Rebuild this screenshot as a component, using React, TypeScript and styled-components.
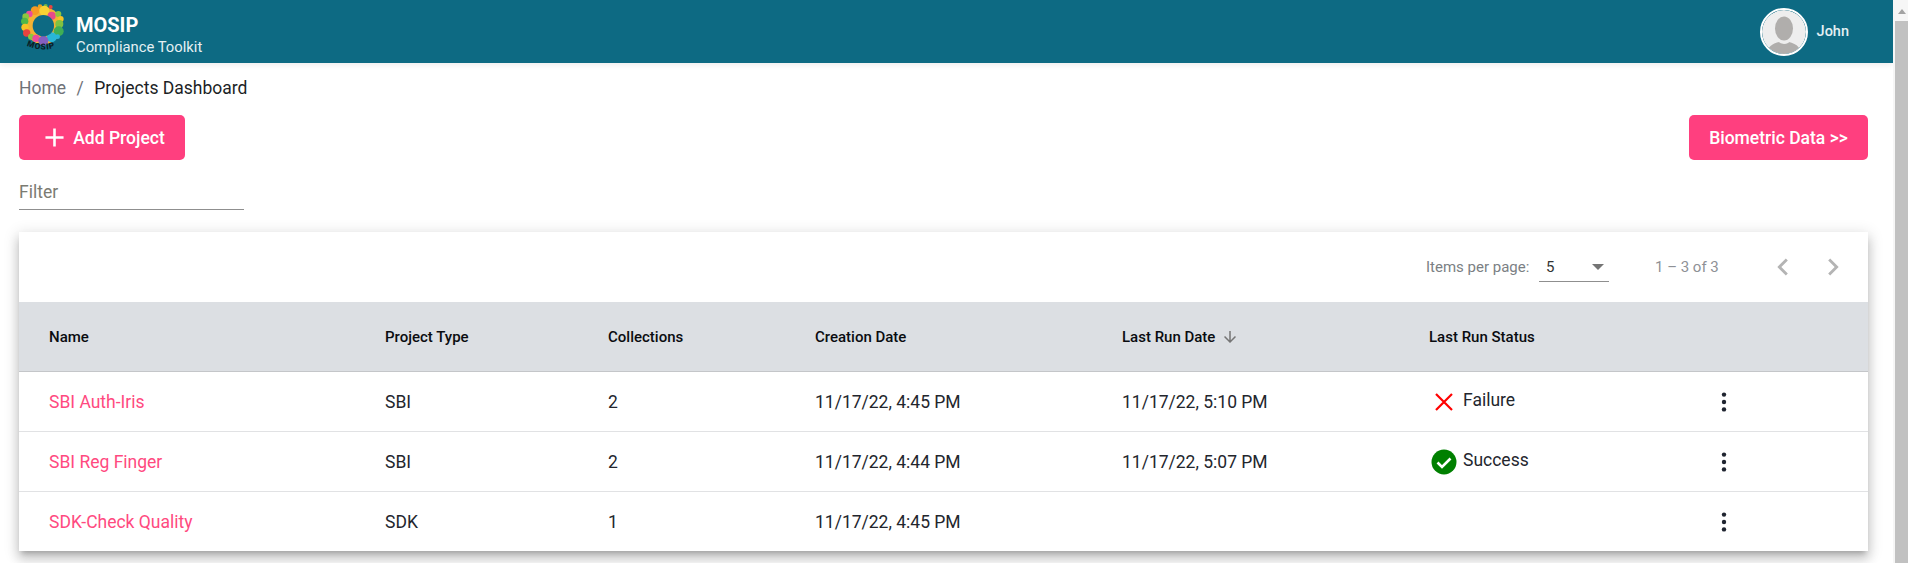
import React from "react";
import styled, { createGlobalStyle } from "styled-components";

const GlobalStyle = createGlobalStyle`
  html, body {
    margin: 0;
    padding: 0;
    height: 563px;
    overflow: hidden;
    background: #fff;
    font-family: Roboto, "Liberation Sans", sans-serif;
  }
`;

interface Project {
  name: string;
  type: string;
  collections: number;
  created: string;
  lastRun: string;
  status?: "Failure" | "Success";
}

const projects: Project[] = [
  { name: "SBI Auth-Iris", type: "SBI", collections: 2, created: "11/17/22, 4:45 PM", lastRun: "11/17/22, 5:10 PM", status: "Failure" },
  { name: "SBI Reg Finger", type: "SBI", collections: 2, created: "11/17/22, 4:44 PM", lastRun: "11/17/22, 5:07 PM", status: "Success" },
  { name: "SDK-Check Quality", type: "SDK", collections: 1, created: "11/17/22, 4:45 PM", lastRun: "" },
];

// colour, cx, cy, r of each blob of the logo ring
const logoDots = [
  ["#e8a01f", 90, 18, 7], ["#6fb544", 107, 16, 6], ["#e8433f", 122, 19, 6],
  ["#f59a23", 75, 30, 13], ["#f7d234", 103, 30, 15], ["#ec4b9b", 58, 40, 10],
  ["#e84a8a", 125, 45, 12], ["#8cc63f", 145, 40, 9], ["#f7c325", 152, 55, 9],
  ["#8cc63f", 47, 48, 10], ["#4fb848", 44, 62, 11], ["#7fc241", 148, 70, 12],
  ["#3fae55", 146, 92, 15], ["#f7c325", 45, 80, 11], ["#e8433f", 50, 97, 11],
  ["#8cc63f", 63, 108, 9], ["#ec4b9b", 78, 113, 11], ["#29b6d8", 143, 108, 7],
  ["#29b6d8", 125, 110, 15], ["#8560c0", 100, 120, 15],
] as const;

const App: React.FC = () => {
  return (
    <Page>
      <GlobalStyle />
      <Main>
        <TopBar>
          <Brand>
            <svg width="62" height="56" viewBox="12 10 186 168">
              <circle cx="100" cy="75" r="56" fill="#f2b233" />
              {logoDots.map(([color, cx, cy, r], i) => (
                <circle key={i} cx={cx} cy={cy} r={r} fill={color} />
              ))}
              <circle cx="100" cy="75" r="32" fill="#0d6a83" />
              <path id="logoArc" d="M50 135Q100 158 152 135" fill="none" />
              <text fontFamily="Roboto, sans-serif" fontWeight="900" fontSize="25" letterSpacing="2" fill="#0b1f28">
                <textPath href="#logoArc">MOSIP</textPath>
              </text>
            </svg>
            <BrandText>
              <BrandTitle>MOSIP</BrandTitle>
              <BrandSub>Compliance Toolkit</BrandSub>
            </BrandText>
          </Brand>
          <UserBox>
            <Avatar>
              <svg width="44" height="44" viewBox="0 0 44 44">
                <circle cx="22" cy="22" r="22" fill="#eeeeee" />
                <clipPath id="avatarClip"><circle cx="22" cy="22" r="22" /></clipPath>
                <g clipPath="url(#avatarClip)">
                  <path d="M5 44c1-8 5-11 17-13 12 2 16 5 17 13z" fill="#b0aeac" />
                  <ellipse cx="22" cy="20" rx="10.5" ry="14" fill="#eeeeee" />
                  <ellipse cx="22" cy="18.5" rx="9" ry="12" fill="#b0aeac" />
                </g>
              </svg>
            </Avatar>
            <UserName>John</UserName>
          </UserBox>
        </TopBar>

        <Content>
          <Breadcrumb>
            <Crumb>Home</Crumb>
            <CrumbSep>/</CrumbSep>
            <CrumbCurrent>Projects Dashboard</CrumbCurrent>
          </Breadcrumb>

          <Actions>
            <PinkButton $wide={false}>
              <svg width="31" height="31" viewBox="0 0 24 24" fill="#fff">
                <path d="M19 13h-6v6h-2v-6H5v-2h6V5h2v6h6v2z" />
              </svg>
              Add Project
            </PinkButton>
            <PinkButton $wide>Biometric Data &gt;&gt;</PinkButton>
          </Actions>

          <FilterField>
            <FilterLabel>Filter</FilterLabel>
          </FilterField>

          <Card>
            <Paginator>
              <PagerLabel>Items per page:</PagerLabel>
              <PageSelect>
                <span>5</span>
                <SelectCaret />
              </PageSelect>
              <PagerRange>1 – 3 of 3</PagerRange>
              <PagerNav>
                <svg width="34" height="34" viewBox="0 0 24 24" fill="#b4b4b4">
                  <path d="M15.41 7.41L14 6l-6 6 6 6 1.41-1.41L10.83 12z" />
                </svg>
                <svg width="34" height="34" viewBox="0 0 24 24" fill="#b4b4b4">
                  <path d="M10 6L8.59 7.41 13.17 12l-4.58 4.59L10 18l6-6z" />
                </svg>
              </PagerNav>
            </Paginator>

            <HeaderRow>
              <HeadCell>Name</HeadCell>
              <HeadCell>Project Type</HeadCell>
              <HeadCell>Collections</HeadCell>
              <HeadCell>Creation Date</HeadCell>
              <HeadCell>
                Last Run Date
                <SortIcon>
                  <svg width="18" height="18" viewBox="0 0 24 24" fill="#757575">
                    <path d="M20 12l-1.41-1.41L13 16.17V4h-2v12.17l-5.58-5.59L4 12l8 8 8-8z" />
                  </svg>
                </SortIcon>
              </HeadCell>
              <HeadCell>Last Run Status</HeadCell>
              <HeadCell />
            </HeaderRow>

            {projects.map((p) => (
              <BodyRow key={p.name}>
                <NameCell>{p.name}</NameCell>
                <Cell>{p.type}</Cell>
                <Cell>{p.collections}</Cell>
                <Cell>{p.created}</Cell>
                <Cell>{p.lastRun}</Cell>
                <StatusCell>
                  {p.status === "Failure" && (
                    <>
                      <StatusIcon>
                        <svg width="26" height="26" viewBox="0 0 26 26">
                          <path d="M5 5l16 16M21 5L5 21" stroke="#f00" strokeWidth="2.2" fill="none" />
                        </svg>
                      </StatusIcon>
                      Failure
                    </>
                  )}
                  {p.status === "Success" && (
                    <>
                      <StatusIcon>
                        <svg width="26" height="26" viewBox="0 0 26 26">
                          <circle cx="13" cy="13" r="12.5" fill="#008000" />
                          <path d="M6.5 13.5l4.5 4.5 8.5-8.5" stroke="#fff" strokeWidth="2.6" fill="none" />
                        </svg>
                      </StatusIcon>
                      Success
                    </>
                  )}
                </StatusCell>
                <MenuCell>
                  <svg width="6" height="20" viewBox="0 0 6 20">
                    <circle cx="3" cy="2.6" r="2.2" fill="#1f2430" />
                    <circle cx="3" cy="10" r="2.2" fill="#1f2430" />
                    <circle cx="3" cy="17.4" r="2.2" fill="#1f2430" />
                  </svg>
                </MenuCell>
              </BodyRow>
            ))}
          </Card>
        </Content>
      </Main>

      <ScrollTrack>
        <ScrollArrow />
        <ScrollThumb />
      </ScrollTrack>
    </Page>
  );
};

export default App;

/** Styled Components */
const Page = styled.div`
  display: flex;
  width: 1908px;
  height: 563px;
  overflow: hidden;
`;

const Main = styled.div`
  flex: 1;
  min-width: 0;
`;

const TopBar = styled.header`
  display: flex;
  justify-content: space-between;
  align-items: center;
  height: 63px;
  padding: 0 44px 0 14px;
  background: #0d6a83;
  box-shadow: 0 2px 6px rgba(0, 0, 0, 0.08);
`;

const Brand = styled.div`
  display: flex;
  align-items: center;
`;

const BrandText = styled.div`
  display: flex;
  flex-direction: column;
  margin-top: 7px;
  color: #fff;
`;

const BrandTitle = styled.span`
  font-size: 20px;
  font-weight: 700;
  line-height: 23px;
`;

const BrandSub = styled.span`
  font-size: 14.8px;
  line-height: 20px;
  color: #e4f0f3;
`;

const UserBox = styled.div`
  display: flex;
  align-items: center;
  gap: 9px;
`;

const Avatar = styled.div`
  display: flex;
  width: 44px;
  height: 44px;
  border: 2px solid #fff;
  border-radius: 50%;
  overflow: hidden;
`;

const UserName = styled.span`
  font-size: 14.5px;
  font-weight: 500;
  color: #e4f0f3;
`;

const Content = styled.main`
  padding: 0 25px 0 19px;
`;

const Breadcrumb = styled.nav`
  display: flex;
  align-items: center;
  height: 50px;
  font-size: 17.5px;
`;

const Crumb = styled.span`
  color: #6f7278;
`;

const CrumbSep = styled.span`
  margin: 0 10.5px;
  color: #6f7278;
`;

const CrumbCurrent = styled.span`
  color: #1c1f26;
`;

const Actions = styled.div`
  display: flex;
  justify-content: space-between;
  margin-top: 2px;
`;

const PinkButton = styled.button<{ $wide: boolean }>`
  display: flex;
  align-items: center;
  justify-content: center;
  gap: 3px;
  width: ${(props) => (props.$wide ? "179px" : "166px")};
  height: 45px;
  padding: 0;
  border: none;
  border-radius: 5px;
  background: #ff3f7f;
  color: #fff;
  font-family: inherit;
  font-size: 17.5px;
  font-weight: 500;
`;

const FilterField = styled.div`
  display: flex;
  align-items: center;
  width: 225px;
  height: 34px;
  margin-top: 15px;
  border-bottom: 1px solid #8f8f8f;
`;

const FilterLabel = styled.span`
  font-size: 17.5px;
  color: #7b7b72;
`;

const Card = styled.section`
  margin-top: 22px;
  background: #fff;
  box-shadow: 0 5px 5px -3px rgba(0, 0, 0, 0.2), 0 8px 10px 1px rgba(0, 0, 0, 0.14), 0 3px 14px 2px rgba(0, 0, 0, 0.12);
`;

const Paginator = styled.div`
  display: flex;
  align-items: center;
  height: 70px;
  padding-left: 1407px;
  font-size: 15px;
  color: #7b7f84;
`;

const PagerLabel = styled.span`
  width: 113px;
`;

const PageSelect = styled.div`
  display: flex;
  justify-content: space-between;
  align-items: center;
  box-sizing: border-box;
  width: 70px;
  height: 30px;
  padding: 0 5px 0 7px;
  border-bottom: 1px solid #8f8f8f;
  color: #333;
`;

const SelectCaret = styled.i`
  width: 0;
  height: 0;
  border-left: 6px solid transparent;
  border-right: 6px solid transparent;
  border-top: 6px solid #757575;
`;

const PagerRange = styled.span`
  margin-left: 46px;
  width: 111px;
  color: #8e9196;
`;

const PagerNav = styled.div`
  display: flex;
  gap: 16px;
`;

const gridColumns = "366px 223px 207px 307px 307px 276px 163px";

const HeaderRow = styled.div`
  display: grid;
  grid-template-columns: ${gridColumns};
  align-items: center;
  height: 69px;
  background: #dcdfe3;
  border-bottom: 1px solid #c4c6c9;
`;

const HeadCell = styled.div`
  display: flex;
  align-items: center;
  padding-left: 30px;
  font-size: 15px;
  font-weight: 500;
  color: #0a0c10;

  &:nth-child(n + 2) {
    padding-left: 0;
  }
`;

const SortIcon = styled.span`
  display: flex;
  margin-left: 6px;
`;

const BodyRow = styled.div`
  display: grid;
  grid-template-columns: ${gridColumns};
  align-items: center;
  height: 59px;
  border-bottom: 1px solid #e1e2e4;

  &:last-child {
    border-bottom: none;
  }
`;

const Cell = styled.div`
  font-size: 17.5px;
  color: #23262d;
`;

const NameCell = styled(Cell)`
  padding-left: 30px;
  color: #ff4a80;
`;

const StatusCell = styled(Cell)`
  display: flex;
  align-items: center;
  gap: 6px;
  height: 26px;
  margin-top: -4px;
`;

const StatusIcon = styled.span`
  display: flex;
  width: 26px;
  height: 26px;
  margin: 4px 0 0 2px;
`;

const MenuCell = styled.div`
  display: flex;
  margin-left: 16px;
`;

const ScrollTrack = styled.aside`
  display: flex;
  flex-direction: column;
  align-items: center;
  width: 15px;
  padding-left: 2px;
  box-sizing: border-box;
  background: #f6f6f6;
`;

const ScrollArrow = styled.i`
  width: 0;
  height: 0;
  margin: 9px 0 7px;
  border-left: 4px solid transparent;
  border-right: 4px solid transparent;
  border-bottom: 5px solid #a3a3a3;
`;

const ScrollThumb = styled.div`
  flex: 1;
  width: 100%;
  background: #c1c1c1;
`;
